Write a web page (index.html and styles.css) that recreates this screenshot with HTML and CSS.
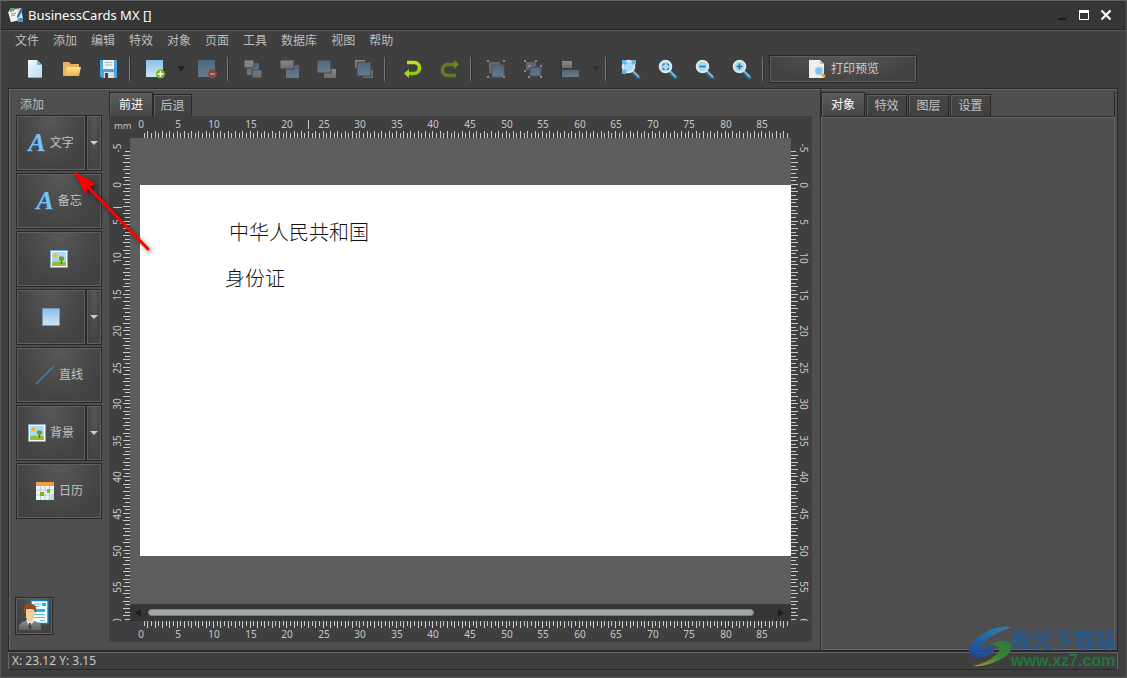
FILE: index.html
```html
<!DOCTYPE html>
<html lang="zh-CN">
<head>
<meta charset="utf-8">
<title>BusinessCards MX</title>
<link rel="stylesheet" href="styles.css">
</head>
<body>
<svg class="defs" aria-hidden="true">
  <defs>
    <linearGradient id="sky" x1="0" y1="0" x2="0" y2="1"><stop offset="0" stop-color="#8cc0e6"/><stop offset="1" stop-color="#cde5f8"/></linearGradient>
    <linearGradient id="paper" x1="0" y1="0" x2="1" y2="1"><stop offset="0" stop-color="#f2fafd"/><stop offset="1" stop-color="#b4def2"/></linearGradient>
    <linearGradient id="folder" x1="0" y1="0" x2="0" y2="1"><stop offset="0" stop-color="#ffe39a"/><stop offset="1" stop-color="#efb245"/></linearGradient>
    <linearGradient id="steel" x1="0" y1="0" x2="0" y2="1"><stop offset="0" stop-color="#51667a"/><stop offset="1" stop-color="#667c8c"/></linearGradient>
    <linearGradient id="ash" x1="0" y1="0" x2="0" y2="1"><stop offset="0" stop-color="#898989"/><stop offset="1" stop-color="#6b6b6b"/></linearGradient>
    <linearGradient id="lime" x1="0" y1="0" x2="0" y2="1"><stop offset="0" stop-color="#b8e61c"/><stop offset="1" stop-color="#8fc800"/></linearGradient>
    <linearGradient id="letter" x1="0" y1="0" x2="0" y2="1"><stop offset="0" stop-color="#8fcbf4"/><stop offset="1" stop-color="#62b2ea"/></linearGradient>
    <linearGradient id="suit" x1="0" y1="0" x2="0" y2="1"><stop offset="0" stop-color="#8c8c8c"/><stop offset="1" stop-color="#5f6062"/></linearGradient>
    <linearGradient id="swooshBlue" x1="0" y1="1" x2="1" y2="0"><stop offset="0" stop-color="#1c439b"/><stop offset="1" stop-color="#2a8fb8"/></linearGradient>
    <linearGradient id="swooshGreen" x1="0" y1="1" x2="1" y2="0"><stop offset="0" stop-color="#b5a91c"/><stop offset=".5" stop-color="#3c8c33"/><stop offset="1" stop-color="#1f8040"/></linearGradient>
    <symbol id="picture" viewBox="0 0 18 18">
      <path d="M.5.500h17v17H.500z" fill="#fff" stroke="#7fa9c2"/>
      <path d="M2 2h14v14H2z" fill="#a9dafa"/><circle cx="5.500" cy="5.500" r="1.900" fill="#f8b530"/>
      <path d="M2 12q7-1 14 0v4H2z" fill="#8fbd38"/><path d="M11.500 9v5" stroke="#87562a" stroke-width="1.200"/>
      <ellipse cx="11.500" cy="8.500" rx="2.700" ry="2.300" fill="#6a9c34"/>
    </symbol>
    <symbol id="glass" viewBox="0 0 20 20">
      <path d="M11 12l6.500 6.500" stroke="#34718f" stroke-width="3.600" stroke-linecap="round"/>
      <path d="M11.500 11.500l6 6" stroke="#86c9e8" stroke-width="1.600" stroke-linecap="round"/>
      <circle cx="7.500" cy="7.500" r="5.800" fill="#a5dcf8" stroke="#e2e7ea" stroke-width="2"/>
    </symbol>
  </defs>
</svg>

<div class="window">
  <header class="titlebar">
    <svg class="app-icon" width="16" height="16" viewBox="0 0 16 16"><path d="M1 3l12-2 2 11-12 3z" fill="#d6dfe2"/><path d="M0 5l9-2 2 10-8 2z" fill="#f3f4f1"/><path d="M2 1l5 0-1 3-4 1z" fill="#65a16c"/><path d="M3 7l5-1M3 9l4-1" stroke="#8f9aa0"/><path d="M13 1l2 1-4 8-2 1 0-2z" fill="#346d99"/><path d="M10 11l5 0v4h-5z" fill="#4996cb"/></svg>
    <h1 class="title">BusinessCards MX []</h1>
    <div class="controls">
      <button class="control" type="button" aria-label="最小化"><svg width="12" height="12"><path d="M2 9h8v2H2z" fill="#191919"/></svg></button>
      <button class="control" type="button" aria-label="最大化"><svg width="12" height="12"><path d="M1.500 2.500h9v8h-9z" fill="none" stroke="#fff"/><path d="M1 1h10v3H1z" fill="#fff"/></svg></button>
      <button class="control" type="button" aria-label="关闭"><svg width="12" height="12"><path d="M1.500 1.500l9 9M10.500 1.500l-9 9" stroke="#fff" stroke-width="2.200"/></svg></button>
    </div>
  </header>

  <nav class="menu">
    <a href="#">文件</a><a href="#">添加</a><a href="#">编辑</a><a href="#">特效</a><a href="#">对象</a><a href="#">页面</a><a href="#">工具</a><a href="#">数据库</a><a href="#">视图</a><a href="#">帮助</a>
  </nav>

  <div class="toolbar">
    <button class="tool" type="button" aria-label="新建"><svg width="20" height="20"><path d="M3 1h9l5 5v13H3z" fill="url(#paper)"/><path d="M12 1v5h5z" fill="#69b7dc"/><path d="M3 18.500h14" stroke="#74b7d4"/></svg></button>
    <button class="tool" type="button" aria-label="打开"><svg width="20" height="20"><path d="M1 3h6l2 2h8v4H5L1 17z" fill="#e5b65c"/><path d="M5 8h14l-2 9H1z" fill="url(#folder)"/></svg></button>
    <button class="tool" type="button" aria-label="保存"><svg width="20" height="20"><path d="M1 1h17v18H3l-2-2z" fill="#49a5dc"/><path d="M4 1h11v9H4z" fill="#eff3f4"/><path d="M6 3.500h7M6 6h7" stroke="#b1b9bd"/><path d="M5 13h10v6H5z" fill="#d7dde0"/><path d="M6 14h3v5H6z" fill="#35434c"/></svg></button>
    <span class="separator"></span>
    <button class="tool" type="button" aria-label="添加页"><svg width="20" height="20"><path d="M1 1h17v17H1z" fill="url(#sky)"/><circle cx="15.500" cy="15" r="4.500" fill="#75ae16"/><path d="M12.500 15h6M15.500 12v6" stroke="#fff" stroke-width="1.600"/></svg></button>
    <button class="drop" type="button" aria-label="页面选项"></button>
    <button class="tool" type="button" aria-label="删除页"><svg width="20" height="20"><path d="M1 1h17v17H1z" fill="url(#steel)"/><circle cx="15.500" cy="15" r="4.500" fill="#87453f"/><path d="M13 15h5" stroke="#b49c98" stroke-width="1.500"/></svg></button>
    <span class="separator"></span>
    <button class="tool" type="button" aria-label="前移"><svg width="20" height="20"><path d="M4 4h12v12H4z" fill="url(#steel)"/><path d="M1 1h10v8H1zM9 11h10v8H9z" fill="url(#ash)" stroke="#424242"/></svg></button>
    <button class="tool" type="button" aria-label="后移"><svg width="20" height="20"><path d="M6 6h13v13H6z" fill="url(#steel)"/><path d="M0 1h14v9H0z" fill="url(#ash)" stroke="#454545"/></svg></button>
    <button class="tool" type="button" aria-label="置于前面"><svg width="20" height="20"><path d="M7 10h12v9H7z" fill="url(#ash)"/><path d="M0 1h14v13H0z" fill="url(#steel)" stroke="#454545"/></svg></button>
    <button class="tool" type="button" aria-label="置于后面"><svg width="20" height="20"><path d="M1 1h10v8H1zM9 11h10v8H9z" fill="url(#ash)"/><path d="M3 3h14v14H3z" fill="url(#steel)" stroke="#454545"/></svg></button>
    <span class="separator"></span>
    <span class="history">
      <button class="tool" type="button" aria-label="撤销"><svg width="20" height="20"><path d="M4 3.500h7a5.500 5.500 0 010 11H5" fill="none" stroke="url(#lime)" stroke-width="3.500"/><path d="M6 10v9l-5-4.500z" fill="#a4db10"/></svg></button>
      <button class="tool" type="button" aria-label="重做"><svg width="20" height="20"><path d="M16 16.500H8a5.500 5.500 0 010-11h7" fill="none" stroke="#657c26" stroke-width="3.500"/><path d="M14 1v9l5-4.500z" fill="#6d8728"/></svg></button>
    </span>
    <span class="separator"></span>
    <button class="tool" type="button" aria-label="组合"><svg width="20" height="20"><path d="M3 3h11v11H3z" fill="#586977"/><path d="M6 6h12v12H6z" fill="url(#steel)" stroke="#4c5963"/><path d="M1 1h2v2H1zM17 1h2v2h-2zM1 17h2v2H1zM17 17h2v2h-2z" fill="#8b8b8b"/></svg></button>
    <button class="tool" type="button" aria-label="取消组合"><svg width="20" height="20"><path d="M3 3h10v8H3z" fill="#586977"/><path d="M7 8h11v9H7z" fill="url(#steel)" stroke="#454f56"/><path d="M1 1h2v2H1zM12 1h2v2h-2zM5 6h3v2H5zM17 6h2v2h-2zM1 11h2v2H1zM5 17h2v2H5zM17 17h2v2h-2z" fill="#898989"/></svg></button>
    <button class="tool" type="button" aria-label="对齐"><svg width="20" height="20"><path d="M1 1v18" stroke="#333"/><path d="M2 2h10v7H2z" fill="url(#ash)"/><path d="M2 11h17v7H2z" fill="url(#steel)"/></svg></button>
    <button class="drop faint" type="button" aria-label="对齐选项"></button>
    <span class="separator"></span>
    <button class="tool" type="button" aria-label="适合窗口"><svg width="20" height="20"><use href="#glass"/><path d="M1 1h5L4.500 2.500 6 4 4 6 2.500 4.500 1 6zM15 1h-5l1.500 1.500L10 4l2 2 1.500-1.500L15 6zM1 15v-5l1.500 1.500L4 10l2 2-1.500 1.500L6 15z" fill="#63b5e6"/></svg></button>
    <button class="tool" type="button" aria-label="实际大小"><svg width="20" height="20"><use href="#glass"/><path d="M5 7V5h2M8.500 5h2v2M5 8.500v2h2M8.500 10.500h2v-2" fill="none" stroke="#287cab"/></svg></button>
    <button class="tool" type="button" aria-label="缩小"><svg width="20" height="20"><use href="#glass"/><path d="M4.500 7.500h6" stroke="#2474a2" stroke-width="1.600"/></svg></button>
    <button class="tool" type="button" aria-label="放大"><svg width="20" height="20"><use href="#glass"/><path d="M4.500 7.500h6M7.500 4.500v6" stroke="#2474a2" stroke-width="1.600"/></svg></button>
    <span class="separator"></span>
    <button class="print raised" type="button"><svg width="20" height="20"><path d="M2 1h11l4 4v14H2z" fill="#eef0f0"/><path d="M13 1v4h4z" fill="#bcc0c2"/><path d="M15 15l3 3" stroke="#f0a02c" stroke-width="3"/><circle cx="12" cy="12" r="4" fill="#7fc4ec" stroke="#bcd8e6"/></svg>打印预览</button>
  </div>

  <main class="workspace">
    <aside class="add-panel">
      <h2 class="heading">添加</h2>
      <div class="row"><button class="add raised" type="button"><span class="letter" aria-hidden="true">A</span>文字</button><button class="more raised" type="button" aria-label="文字选项"></button></div>
      <div class="row"><button class="add raised" type="button"><span class="letter" aria-hidden="true">A</span>备忘</button></div>
      <div class="row"><button class="add raised" type="button" aria-label="图片"><svg width="18" height="18"><use href="#picture"/></svg></button></div>
      <div class="row"><button class="add raised" type="button" aria-label="形状"><svg width="18" height="18"><path d="M.500.500h17v17H.500z" fill="url(#sky)" stroke="#6f9fc0"/></svg></button><button class="more raised" type="button" aria-label="形状选项"></button></div>
      <div class="row"><button class="add raised" type="button"><svg width="20" height="20"><path d="M1 19L19 1" stroke="#3e86aa" stroke-width="1.200"/></svg>直线</button></div>
      <div class="row"><button class="add raised" type="button"><svg width="18" height="18"><use href="#picture"/></svg>背景</button><button class="more raised" type="button" aria-label="背景选项"></button></div>
      <div class="row"><button class="add raised" type="button"><svg width="20" height="20"><path d="M1 1h18v18H1z" fill="#f0f5f7"/><path d="M1 1h18v4H1z" fill="#f59b45"/><path d="M1 9h18M1 14h18M5.500 5v14M10 5v14M14.500 5v14" stroke="#b3cfdd"/><path d="M5 11h4v4H5zM12 8h3v4h-3z" fill="#7db50d"/><path d="M19 12v7h-7z" fill="#b8d9ea"/></svg>日历</button></div>
      <button class="person raised" type="button" aria-label="联系人信息"><svg width="34" height="34" viewBox="0 0 34 34"><path d="M14 1.500h17v23H14z" fill="#f6fbfd" stroke="#1680b8" stroke-width="1.400"/><path d="M17 5h7M17 7.500h5M17 15.500h11M17 18.500h11M23 21.500h5" stroke="#6fb4d3"/><path d="M25 4h4v3h-4zM17 10h11v3H17z" fill="#28b5dc"/><path d="M2 31v-4q1-4 7-5l4 2 4-2q6 1 7 5v4z" fill="url(#suit)"/><path d="M9 21l4 8 4-8z" fill="#ededed"/><path d="M12 24h2l1 4-2 3-2-3z" fill="#474b50"/><path d="M9 10h8v8q-1 5-4 5t-4-5z" fill="#f3d092"/><path d="M7 15Q5 4 13 4.500q8 0 6 10l-2-4q-4 0-7-2-1 3-3 6.500z" fill="#92501c"/></svg></button>
    </aside>

    <section class="editor">
      <div class="tabs" role="tablist"><button class="tab active" role="tab" aria-selected="true" type="button">前进</button><button class="tab" role="tab" aria-selected="false" type="button">后退</button></div>
      <div class="frame">
        <span class="unit">mm</span>
        <svg class="ruler top" data-side="top"></svg>
        <svg class="ruler left" data-side="left"></svg>
        <div class="canvas"><div class="card"><p class="line first">中华人民共和国</p><p class="line second">身份证</p></div></div>
        <svg class="ruler right" data-side="right"></svg>
        <div class="scrollbar"><svg width="6" height="8"><path d="M6 0v8L0 4z" fill="#1d1d1d"/></svg><div class="track"><div class="thumb"></div></div><svg width="6" height="8"><path d="M0 0v8l6-4z" fill="#1d1d1d"/></svg></div>
        <svg class="ruler bottom" data-side="bottom"></svg>
      </div>
    </section>

    <aside class="properties">
      <div class="tabs" role="tablist"><button class="tab active" role="tab" aria-selected="true" type="button">对象</button><button class="tab" role="tab" aria-selected="false" type="button">特效</button><button class="tab" role="tab" aria-selected="false" type="button">图层</button><button class="tab" role="tab" aria-selected="false" type="button">设置</button></div>
      <div class="sheet"></div>
    </aside>
  </main>

  <footer class="status">X: 23.12 Y: 3.15</footer>
</div>

<svg class="pointer" width="90" height="96" aria-hidden="true"><path d="M19 18L80 81" stroke="#f00" stroke-width="3" stroke-linecap="round"/><path d="M5 3l23 13-8 3-2 8z" fill="#f00"/></svg>

<div class="watermark">
  <svg width="46" height="42" viewBox="0 0 46 42" aria-hidden="true"><path d="M44 1Q28-1 14 8Q-3 20 2 28Q6 35 21 29Q12 30 13 23Q15 11 44 1z" fill="url(#swooshBlue)"/><path d="M26 19Q15 22 13 26q0 4 8 3 7-3 5-10z" fill="#4e4e4e"/><path d="M13 25q3-5 11-5 4 3 0 7-6 4-11 1z" fill="#22539b"/><path d="M22 18q17-6 21 0 3 9-12 16Q18 41 5 40q17-4 25-13 5-7-8-9z" fill="url(#swooshGreen)"/><path d="M6 39q12-2 20-9" fill="none" stroke="#4e4e4e"/></svg>
  <div class="brand"><span class="brand-name">极光下载站</span><span class="brand-url">www.xz7.com</span></div>
</div>
<script src="rulers.js"></script>
</body>
</html>
```

FILE: styles.css
```css
* { box-sizing: border-box; }
body {
  margin: 0;
  background: #3f3f3f;
  color: #c3c3c3;
  font: 12px/16px "Noto Sans", "Noto Sans CJK SC", sans-serif;
}
button { margin: 0; padding: 0; border: 0; background: none; color: inherit; font: inherit; }
svg { display: block; flex: none; }
.defs { position: absolute; width: 0; height: 0; }

.window {
  display: flex;
  flex-direction: column;
  min-height: 100vh;
  padding-bottom: 7px;
  border: 1px solid #555;
  border-top-color: #686868;
}

.titlebar {
  display: flex;
  align-items: center;
  gap: 4px;
  height: 29px;
  padding: 0 14px 0 7px;
  background: #363636;
  border-bottom: 1px solid #242424;
}
.title { flex: 1; margin: 0; color: #fff; font-size: 13px; font-weight: 400; }
.controls { display: flex; gap: 10px; }
.control { width: 12px; height: 12px; }

.menu { display: flex; gap: 14px; height: 23px; padding: 2px 14px; border-top: 1px solid #565656; }
.menu a { color: #bdbdbd; text-decoration: none; }

.toolbar { display: flex; align-items: center; height: 35px; padding: 0 0 3px 15px; }
.tool { display: flex; justify-content: center; width: 37px; padding: 5px 0; }
.history { display: flex; padding-left: 3px; }
.separator { width: 2px; height: 24px; margin: 0 5px 0 2px; background: #777; border-right: 1px solid #303030; }
.drop { display: flex; justify-content: center; width: 15px; }
.drop::before { content: ""; border: 4px solid transparent; border-top: 6px solid #222; border-bottom: 0; }
.drop.faint::before { border-top-color: #333; }

.raised {
  border: 1px solid #282828;
  box-shadow: inset 0 0 0 1px #606060;
  background: radial-gradient(ellipse at 50% 0, #585858, #424242 75%);
}
.print { display: flex; align-items: center; justify-content: center; gap: 4px; width: 148px; height: 28px; color: #ccc; }

.workspace {
  display: flex;
  flex: 1;
  margin: 0 8px 0 7px;
  border: 1px solid #292929;
  border-bottom: 2px solid #282828;
  background: #4e4e4e;
  box-shadow: inset 1px 1px #686868;
}

.add-panel { display: flex; flex: none; flex-direction: column; gap: 2px; width: 100px; padding: 8px 7px 15px; }
.heading { height: 16px; margin: 0; padding: 0 4px; color: #bbb; font-size: 12px; font-weight: 400; }
.row { display: flex; height: 56px; }
.add { display: flex; flex: 1; align-items: center; justify-content: center; gap: 4px; }
.letter { color: #79bff0; font: italic bold 26px/32px "Liberation Serif", serif; text-shadow: 1px 1px #2e6e9d; }
.more { display: flex; align-items: center; justify-content: center; width: 16px; }
.more::before { content: ""; border: 4px solid transparent; border-top-color: #ccc; border-bottom: 0; }
.person { display: flex; align-items: center; justify-content: center; width: 38px; height: 38px; margin-top: auto; margin-left: -1px; }

.editor { display: flex; flex: 1; flex-direction: column; min-width: 0; padding: 3px 8px 8px 0; }
.tabs { display: flex; align-items: flex-end; height: 24px; }
.tab {
  width: 39px;
  height: 22px;
  border: 1px solid #282828;
  border-bottom: 0;
  background: linear-gradient(#464646, #404040);
  box-shadow: inset 1px 1px #606060;
  color: #c2c2c2;
}
.tab.active { width: 44px; height: 24px; background: linear-gradient(#5b5b5b, #464646); color: #fff; }

.frame {
  display: grid;
  flex: 1;
  grid-template-columns: 21px minmax(0, 1fr) 21px;
  grid-template-rows: 22px minmax(418px, 1fr) 17px 21px;
  background: #3f3f3f;
}
.unit { padding: 4px 0 0 5px; font: 9px/12px "DejaVu Sans", sans-serif; }
.ruler { width: 100%; height: 100%; min-height: 0; overflow: hidden; }
.ruler path { stroke: #cbcbcb; }
.ruler text { fill: #c6c6c6; font-size: 10px; text-anchor: middle; }
.top { grid-area: 1 / 2; }
.left { grid-area: 2 / 1 / 4 / 2; }
.canvas { grid-area: 2 / 2; overflow: hidden; padding: 47px 0 0 10px; background: #5e5e5e; }
.right { grid-area: 2 / 3 / 4 / 4; }
.scrollbar { grid-area: 3 / 2; display: flex; align-items: center; gap: 7px; padding: 0 7px 0 5px; background: #353535; }
.track { flex: 1; padding-right: 17px; }
.thumb { height: 7px; border: 1px solid #7a8282; border-radius: 4px; background: #a2a7aa; }
.bottom { grid-area: 4 / 2; }

.card {
  width: 651px;
  height: 371px;
  padding: 34px 85px;
  background: #fff;
  color: #111;
  font: 300 20px/26px "Noto Sans CJK SC", sans-serif;
}
.line { margin: 0 0 20px; }
.first { padding-left: 4px; }

.properties { display: flex; flex: none; flex-direction: column; width: 297px; padding: 3px 2px 0 0; border-left: 1px solid #292929; }
.properties .tabs { gap: 1px; border-right: 1px solid #292929; }
.properties .tab { width: 41px; }
.properties .tab.active { width: 44px; }
.sheet { flex: 1; border: 1px solid #666; border-top-color: #292929; box-shadow: inset 0 1px #666; }

.status {
  height: 18px;
  margin: 0 8px 0 7px;
  padding-left: 3px;
  border: 1px solid #666;
  border-bottom-color: #292929;
  color: #c9c9c9;
}

.pointer { position: absolute; top: 168px; left: 68px; filter: drop-shadow(2px 2px 2px rgba(0, 0, 0, .5)); pointer-events: none; }

.watermark { position: absolute; right: 11px; bottom: 8px; display: flex; align-items: center; opacity: .9; }
.brand { display: flex; flex-direction: column; margin-left: -3px; }
.brand-name { color: #215b99; font: 700 21px/28px "Noto Sans CJK SC", sans-serif; }
.brand-url { color: #1d803b; font: 700 16px/18px "Liberation Sans", sans-serif; }
```

FILE: rulers.js
```js
// Draws the millimetre rulers around the canvas.
const NS = "http://www.w3.org/2000/svg";
const PX_PER_MM = 7.31;

const SIDES = {
  top: { origin: 10, from: 0.5, to: 88.5, tickStart: 22, direction: -1, label: 12, cursor: 23 },
  bottom: { origin: 10, from: 0.5, to: 88.5, tickStart: 0, direction: 1, label: 17 },
  left: { origin: 46, from: -4.5, to: 59.5, tickStart: 21, direction: -1, label: 9, vertical: true, turn: -90, cursor: 3.15 },
  right: { origin: 46, from: -4.5, to: 59.5, tickStart: 0, direction: 1, label: 12, vertical: true, turn: 90 }
};

function addLine(svg, side, position, a, b) {
  const path = document.createElementNS(NS, "path");
  const p = Math.round(position) + 0.5;
  path.setAttribute("d", side.vertical ? `M${a} ${p}H${b}` : `M${p} ${a}V${b}`);
  svg.append(path);
}

document.querySelectorAll(".ruler").forEach((svg) => {
  const side = SIDES[svg.dataset.side];
  for (let mm = side.from; mm <= side.to; mm += 0.5) {
    const length = Number.isInteger(mm) ? 7 : 5;
    addLine(svg, side, side.origin + mm * PX_PER_MM, side.tickStart, side.tickStart + side.direction * length);
  }
  if (side.cursor) {
    addLine(svg, side, side.origin + side.cursor * PX_PER_MM, 4, 13);
  }
  for (let mm = side.vertical ? -5 : 0; mm <= Math.ceil(side.to); mm += 5) {
    if (!side.vertical && mm > 85) break;
    const text = document.createElementNS(NS, "text");
    const p = Math.round(side.origin + mm * PX_PER_MM) + 1;
    if (side.vertical) {
      text.setAttribute("transform", `translate(${side.label} ${p}) rotate(${side.turn})`);
      text.setAttribute("y", 3);
    } else {
      text.setAttribute("x", p);
      text.setAttribute("y", side.label);
    }
    text.textContent = mm;
    svg.append(text);
  }
});
```
